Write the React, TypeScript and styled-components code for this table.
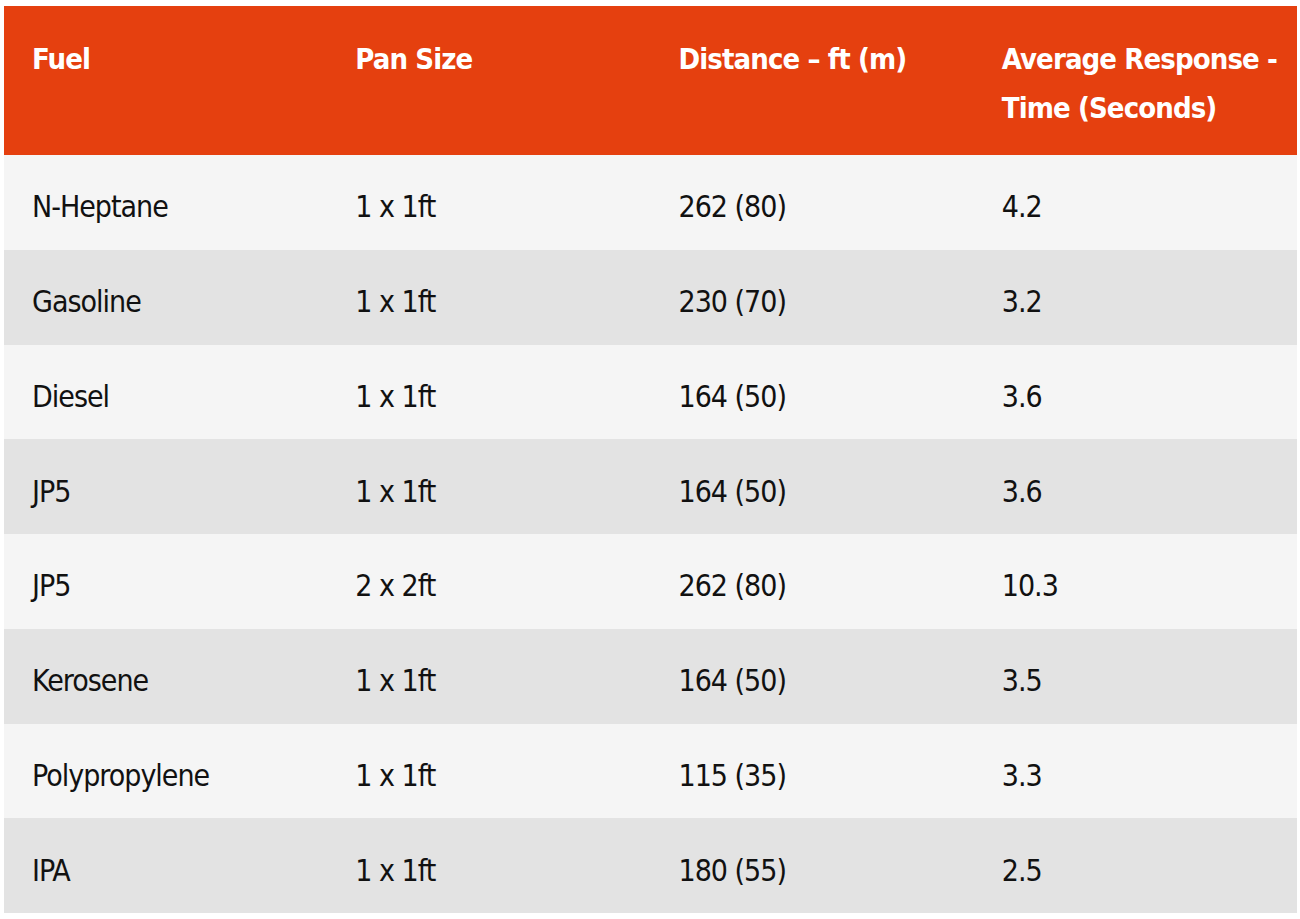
import React from "react";
import styled, { createGlobalStyle } from "styled-components";

const Global = createGlobalStyle`
  html, body { margin: 0; padding: 0; background: #ffffff; }
  body { font-family: "DejaVu Sans", "Liberation Sans", sans-serif; }
`;

const Page = styled.div`
  padding: 6px 3px 6px 4px;
`;

const Table = styled.table`
  width: 1293px;
  border-collapse: collapse;
  table-layout: fixed;
  font-family: "DejaVu Sans Condensed", "DejaVu Sans", "Liberation Sans", sans-serif;
  font-stretch: condensed;
`;

const Col = styled.col`
  width: 323.25px;
`;

const HeadRow = styled.tr`
  background: #e5400f;
  height: 149px;
`;

const HeadCell = styled.th`
  padding: 29px 10px 22px 28px;
  text-align: left;
  vertical-align: top;
  color: #ffffff;
  font-weight: 700;
  font-size: 29px;
  line-height: 49px;
  letter-spacing: -0.9px;
  white-space: nowrap;
`;

const Row = styled.tr<{ $alt: boolean }>`
  background: ${(p) => (p.$alt ? "#e3e3e3" : "#f5f5f5")};
  height: 94.75px;
`;

const Cell = styled.td`
  padding: 10px 10px 0 28px;
  vertical-align: middle;
  color: #111111;
  font-size: 30px;
  line-height: 40px;
  letter-spacing: -1px;
`;

const rows: [string, string, string, string][] = [
  ["N-Heptane", "1 x 1ft", "262 (80)", "4.2"],
  ["Gasoline", "1 x 1ft", "230 (70)", "3.2"],
  ["Diesel", "1 x 1ft", "164 (50)", "3.6"],
  ["JP5", "1 x 1ft", "164 (50)", "3.6"],
  ["JP5", "2 x 2ft", "262 (80)", "10.3"],
  ["Kerosene", "1 x 1ft", "164 (50)", "3.5"],
  ["Polypropylene", "1 x 1ft", "115 (35)", "3.3"],
  ["IPA", "1 x 1ft", "180 (55)", "2.5"],
];

export default function App() {
  return (
    <Page>
      <Global />
      <Table>
        <colgroup>
          <Col />
          <Col />
          <Col />
          <Col />
        </colgroup>
        <thead>
          <HeadRow>
            <HeadCell>Fuel</HeadCell>
            <HeadCell>Pan Size</HeadCell>
            <HeadCell>Distance – ft (m)</HeadCell>
            <HeadCell>
              Average Response -<br />
              Time (Seconds)
            </HeadCell>
          </HeadRow>
        </thead>
        <tbody>
          {rows.map((r, i) => (
            <Row key={i} $alt={i % 2 === 1}>
              {r.map((c, j) => (
                <Cell key={j}>{c}</Cell>
              ))}
            </Row>
          ))}
        </tbody>
      </Table>
    </Page>
  );
}
